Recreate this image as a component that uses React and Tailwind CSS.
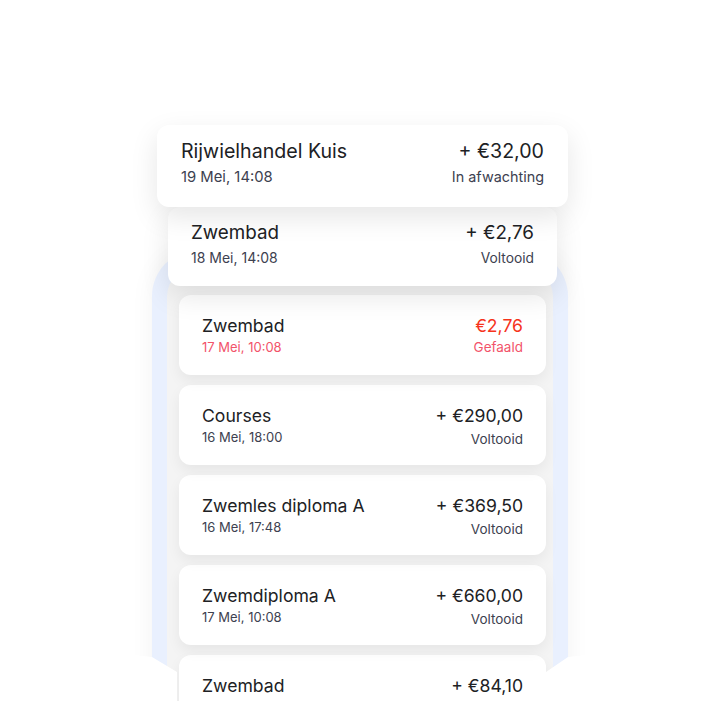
import React from "react";

function Row({ title, date, amount, status, red, size }) {
  const s = size || "md";
  const wrap =
    s === "lg"
      ? "w-[411px] h-[82px] px-[24px] pt-[14px] rounded-[12px] z-[20] shadow-[0_10px_28px_rgba(0,0,0,0.10)]"
      : s === "mid"
      ? "w-[389px] h-[79px] px-[23px] pt-[14px] rounded-[12px] z-[19] shadow-[0_10px_28px_rgba(0,0,0,0.10)]"
      : "w-[367px] h-[80px] px-[23px] pt-[20px] rounded-[12px] shadow-[0_6px_14px_rgba(0,0,0,0.06)]";
  const titleCls =
    s === "lg"
      ? "text-[19.6px] leading-[24px]"
      : s === "mid"
      ? "text-[18.8px] leading-[23px]"
      : "text-[17.6px] leading-[22px]";
  const subCls =
    s === "lg"
      ? "text-[14.8px] leading-[20px] mt-[4px]"
      : s === "mid"
      ? "text-[14px] leading-[18px] mt-[5px]"
      : "text-[13px] leading-[18px] mt-[1px]";
  const statusCls =
    s === "lg"
      ? "text-[14.4px] leading-[20px] mt-[4px]"
      : s === "mid"
      ? "text-[13.8px] leading-[18px] mt-[5px]"
      : red
      ? "text-[13.5px] leading-[18px] mt-[1px]"
      : "text-[13.5px] leading-[18px] mt-[3px]";
  return (
    <div className={"relative bg-white flex justify-between shrink-0 " + wrap}>
      <div className="flex flex-col">
        <div className={"text-[#202124] " + titleCls}>{title}</div>
        <div className={(red ? "text-[#f2536a] " : "text-[#3d4150] ") + subCls}>{date}</div>
      </div>
      <div className="flex flex-col items-end">
        <div className={(red ? "text-[#f6341c] " : "text-[#202124] ") + titleCls}>{amount}</div>
        <div className={(red ? "text-[#f2536a] " : "text-[#3d4150] ") + statusCls}>{status}</div>
      </div>
    </div>
  );
}

export default function App() {
  return (
    <div className="relative w-[720px] h-[721px] overflow-hidden bg-white font-['Inter',sans-serif]">
      <div className="absolute left-[152px] top-[250px] w-[416px] h-[520px] rounded-t-[46px] bg-[#e9f0fe] px-[15px] pt-[15px] shadow-[0_0_24px_rgba(0,0,0,0.05)]">
        <div className="h-full rounded-t-[32px] bg-[#f4f4f4]" />
      </div>

      <div className="relative flex flex-col items-center pt-[125px] pl-[5px]">
        <Row size="lg" title="Rijwielhandel Kuis" date="19 Mei, 14:08" amount="+ €32,00" status="In afwachting" />
        <Row size="mid" title="Zwembad" date="18 Mei, 14:08" amount="+ €2,76" status="Voltooid" />
        <div className="flex flex-col gap-[10px] mt-[9px]">
          <div className="relative z-[9]">
            <Row title="Zwembad" date="17 Mei, 10:08" amount="€2,76" status="Gefaald" red />
          </div>
          <div className="relative z-[8]">
            <Row title="Courses" date="16 Mei, 18:00" amount="+ €290,00" status="Voltooid" />
          </div>
          <div className="relative z-[7]">
            <Row title="Zwemles diploma A" date="16 Mei, 17:48" amount="+ €369,50" status="Voltooid" />
          </div>
          <div className="relative z-[6]">
            <Row title="Zwemdiploma A" date="17 Mei, 10:08" amount="+ €660,00" status="Voltooid" />
          </div>
          <div className="relative z-[5]">
            <Row title="Zwembad" date="17 Mei, 10:08" amount="+ €84,10" status="Voltooid" />
          </div>
        </div>
      </div>

      <div className="absolute left-0 top-[640px] w-[720px] h-[81px] z-[30] bg-white [clip-path:polygon(0_0,152px_17px,177px_32px,177px_61px,546px_61px,546px_32px,568px_17px,100%_0,100%_100%,0_100%)]" />
    </div>
  );
}
